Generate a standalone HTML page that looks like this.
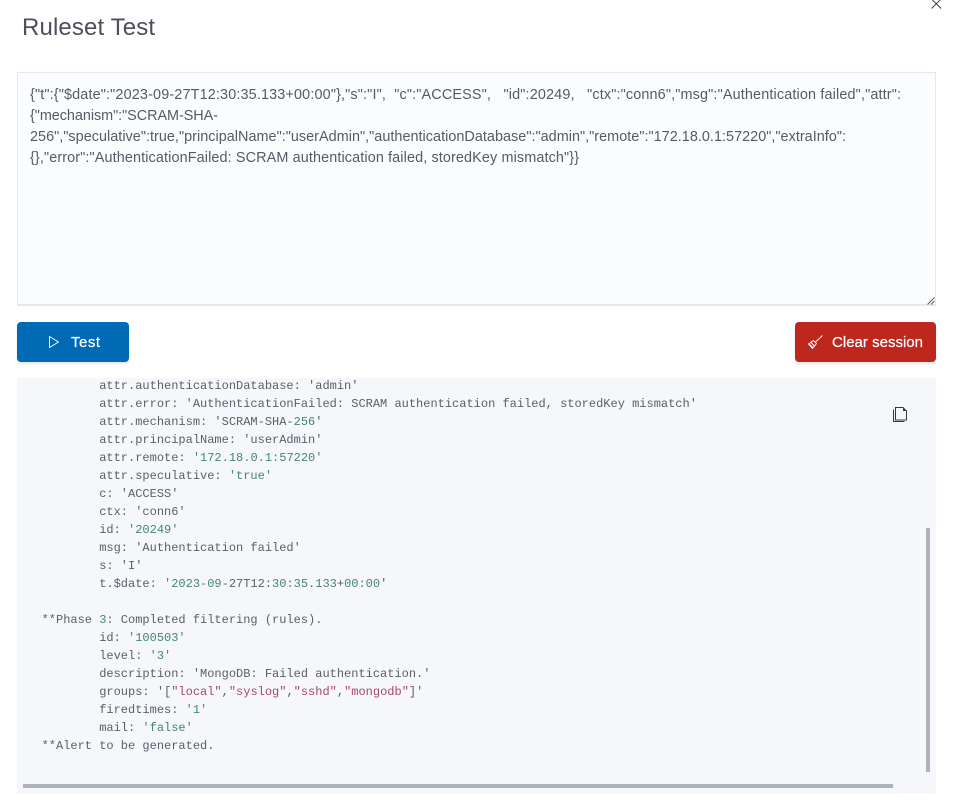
<!DOCTYPE html>
<html><head><meta charset="utf-8"><style>
html,body{margin:0;padding:0;background:#fff;width:953px;height:811px;overflow:hidden}
.abs{position:absolute}
#ta{left:17px;top:72px;width:917px;background:#fbfcfd;border:1px solid #e4e7ef;border-bottom:2px solid #e4e7ef;height:231px}
.btn{top:322px;height:40px;border-radius:4px;box-shadow:0 2px 2px rgba(120,130,150,.2)}
#out{left:17px;top:378px;width:919px;height:416px;background:#f5f7fa;overflow:hidden}
pre{position:absolute;left:24.600px;top:-1px;margin:0;font:12px/18px "Liberation Mono",monospace;color:#5a5f68;white-space:pre}
i{font-style:normal;color:#43886f}
b{font-weight:normal;color:#a9476a}
svg{position:absolute;left:0;top:0}
</style></head><body>
<div class="abs" id="ta"></div>
<div class="abs btn" style="left:17px;width:112px;background:#006bb4"></div>
<div class="abs btn" style="left:795px;width:141px;background:#bd271e"></div>
<div class="abs" id="out"><pre>        attr.authenticationDatabase: 'admin'
        attr.error: 'AuthenticationFailed: SCRAM authentication failed, storedKey mismatch'
        attr.mechanism: 'SCRAM-SHA-<i>256</i>'
        attr.principalName: 'userAdmin'
        attr.remote: <i>'172.18.0.1:57220'</i>
        attr.speculative: <i>'true'</i>
        c: 'ACCESS'
        ctx: 'conn6'
        id: <i>'20249'</i>
        msg: 'Authentication failed'
        s: 'I'
        t.$date: <i>'2023-09</i>-27T12:<i>30:35.133</i>+<i>00:00</i>'

**Phase <i>3</i>: Completed filtering (rules).
        id: <i>'100503'</i>
        level: <i>'3'</i>
        description: 'MongoDB: Failed authentication.'
        groups: '[<b>"local"</b>,<b>"syslog"</b>,<b>"sshd"</b>,<b>"mongodb"</b>]'
        firedtimes: <i>'1'</i>
        mail: <i>'false'</i>
**Alert to be generated.</pre></div>
<div class="abs" style="left:23px;top:784px;width:870px;height:4px;background:#aeb3bb"></div>
<div class="abs" style="left:926px;top:528px;width:4px;height:244px;background:#aeb3bb"></div>
<svg width="953" height="811" viewBox="0 0 953 811" font-family="Liberation Sans, sans-serif">
<text x="22" y="35" font-size="24" fill="#4c505b" textLength="133" lengthAdjust="spacing">Ruleset Test</text>
<g font-size="14.400" fill="#555a64">
<text x="30" y="99" textLength="871" lengthAdjust="spacing" xml:space="preserve">{"t":{"$date":"2023-09-27T12:30:35.133+00:00"},"s":"I",  "c":"ACCESS",   "id":20249,   "ctx":"conn6","msg":"Authentication failed","attr":</text>
<text x="30" y="120" textLength="188" lengthAdjust="spacing">{"mechanism":"SCRAM-SHA-</text>
<text x="30" y="141" textLength="816" lengthAdjust="spacing">256","speculative":true,"principalName":"userAdmin","authenticationDatabase":"admin","remote":"172.18.0.1:57220","extraInfo":</text>
<text x="30" y="162" textLength="549" lengthAdjust="spacing">{},"error":"AuthenticationFailed: SCRAM authentication failed, storedKey mismatch"}}</text>
</g>
<text x="71" y="347" font-size="15" fill="#fff" textLength="29" lengthAdjust="spacing" stroke="#fff" stroke-width=".2">Test</text>
<text x="832" y="347" font-size="15" fill="#fff" textLength="91" lengthAdjust="spacing" stroke="#fff" stroke-width=".2">Clear session</text>
<path d="M49.500 336.500v11l9-5.500z" fill="none" stroke="#fff" stroke-width="1" stroke-linejoin="round"/>
<g fill="none" stroke="#fff" stroke-width=".9">
<path d="M822.500 335.500l-7.500 7"/>
<path d="M813.500 340.500l-5 3.500 4 4.500 4-5z"/>
<path d="M811 342.500l3.500 3.500M809.800 344.500l3 2.800"/>
</g>
<path d="M895.500 407.500h7.500l3.500 3.500v9h-11z" fill="none" stroke="#343741" stroke-width="1"/>
<path d="M893.500 409.500v12h11" fill="none" stroke="#343741" stroke-width="1"/>
<path d="M903 408v3h3z" fill="#343741"/>
<path d="M931.500 -1l9.500 9.500M941 -1l-9.500 9.500" stroke="#343741" stroke-width=".9" fill="none"/>
<path d="M927.500 304.500l7-7M931 304.500l3.500-3.500" stroke="#555" stroke-width=".9" fill="none"/>
</svg>
</body></html>
